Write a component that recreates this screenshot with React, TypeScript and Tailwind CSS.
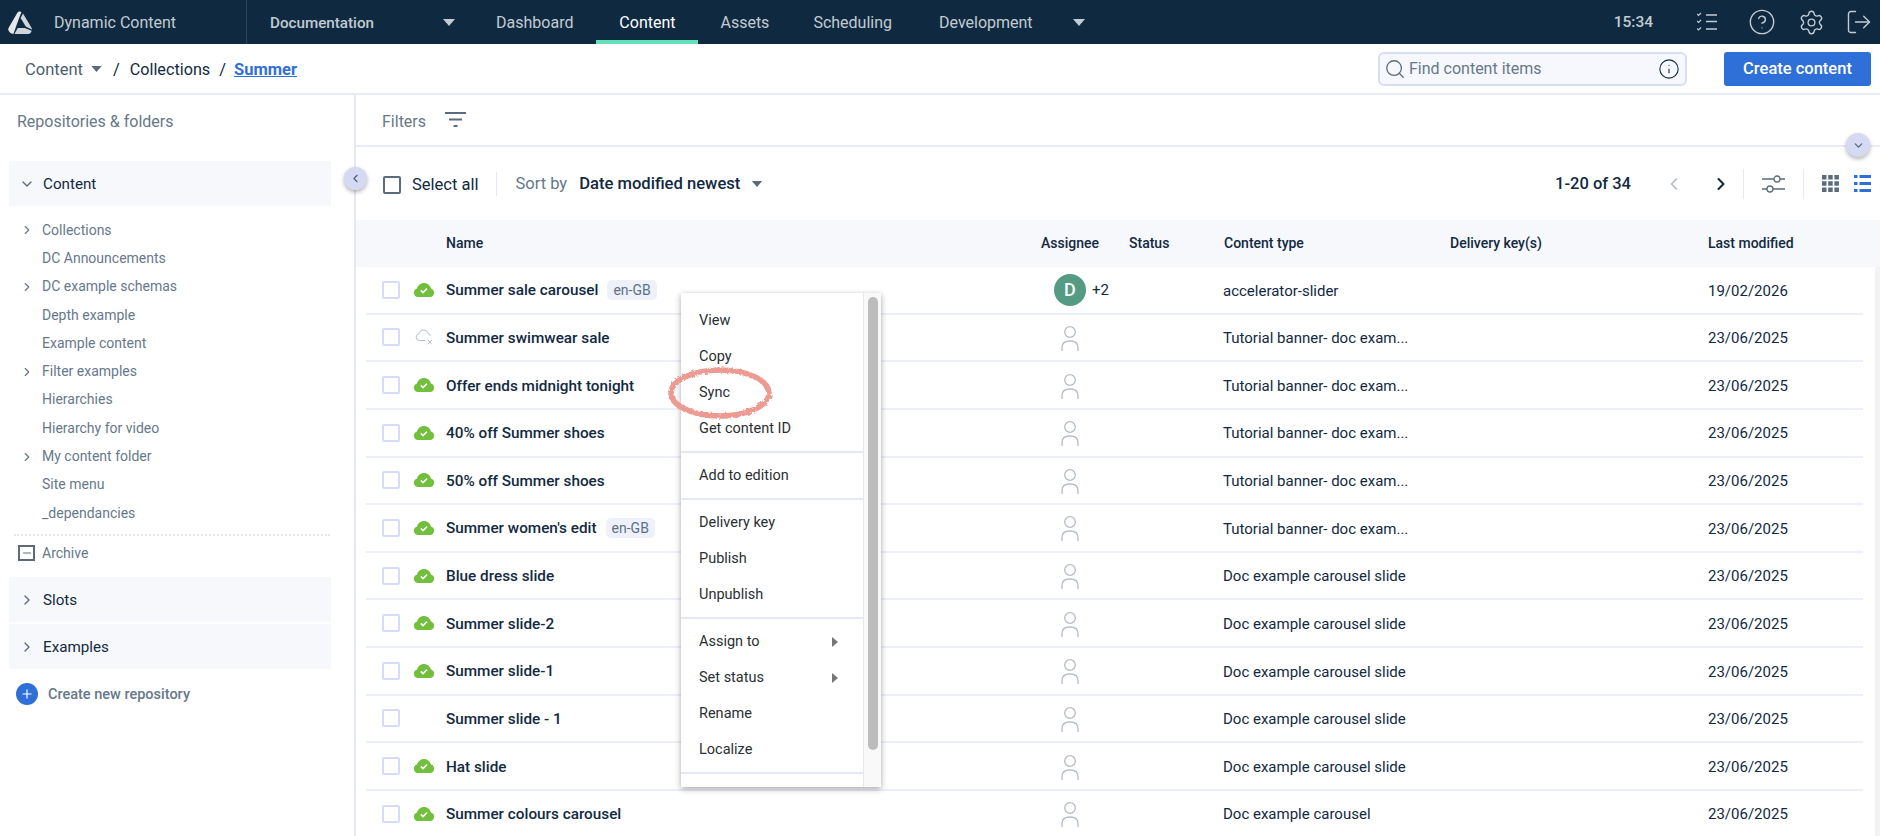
import { ChevronDown, ChevronLeft, ChevronRight, Plus, Search, Info, Settings, LogOut, CircleHelp, Minus } from 'lucide-react';

const font = 'font-["Roboto","Liberation_Sans",sans-serif]';

const tree = [
  { name: 'Collections', arrow: true },
  { name: 'DC Announcements' },
  { name: 'DC example schemas', arrow: true },
  { name: 'Depth example' },
  { name: 'Example content' },
  { name: 'Filter examples', arrow: true },
  { name: 'Hierarchies' },
  { name: 'Hierarchy for video' },
  { name: 'My content folder', arrow: true },
  { name: 'Site menu' },
  { name: '_dependancies' },
];

const tut = 'Tutorial banner- doc exam...';
const slide = 'Doc example carousel slide';

const rows = [
  { name: 'Summer sale carousel', tag: true, status: 'ok', type: 'accelerator-slider', date: '19/02/2026', avatar: true },
  { name: 'Summer swimwear sale', status: 'off', type: tut, date: '23/06/2025' },
  { name: 'Offer ends midnight tonight', status: 'ok', type: tut, date: '23/06/2025' },
  { name: '40% off Summer shoes', status: 'ok', type: tut, date: '23/06/2025' },
  { name: '50% off Summer shoes', status: 'ok', type: tut, date: '23/06/2025' },
  { name: "Summer women's edit", tag: true, status: 'ok', type: tut, date: '23/06/2025' },
  { name: 'Blue dress slide', status: 'ok', type: slide, date: '23/06/2025' },
  { name: 'Summer slide-2', status: 'ok', type: slide, date: '23/06/2025' },
  { name: 'Summer slide-1', status: 'ok', type: slide, date: '23/06/2025' },
  { name: 'Summer slide - 1', status: 'none', type: slide, date: '23/06/2025' },
  { name: 'Hat slide', status: 'ok', type: slide, date: '23/06/2025' },
  { name: 'Summer colours carousel', status: 'ok', type: 'Doc example carousel', date: '23/06/2025' },
];

function Caret({ className }: { className: string }) {
  return (
    <svg viewBox="0 0 12 7" className={className} fill="currentColor">
      <path d="M0 0h12L6 7z" />
    </svg>
  );
}

function Logo() {
  return (
    <svg viewBox="0 0 24 23" className="h-[23px] w-[24px]" fill="#e4e8ec">
      <path d="M9.500 1.500c.7-1.200 3-1.500 4-.5L11 7.200 5.600 22.600c-1 .5-2.300.2-3-.5C1.400 21 .2 19.500.2 18.500c0-.7.300-1.300.6-1.900z" />
      <path d="M15 2.500l8.500 14.300c.3.600.4 1 .3 1.600l-6-3L12.600 7z" opacity="0.9" />
      <path d="M9.800 17h7l6.800 2.800c-.3 1.800-1.500 3.100-3 3.100H7.500c-.4 0-.7-.1-1-.2z" opacity="0.9" />
    </svg>
  );
}

function Checklist() {
  return (
    <svg viewBox="0 0 20 20" className="h-[20px] w-[20px]" fill="none" stroke="currentColor">
      <path d="M0 2l1.500 1.500L4 1M0 9l1.500 1.500L4 8M0 16.500L1.500 18 4 15.500" strokeWidth="1.200" />
      <path d="M9 3h11M9 9.500h11M9 17h11" strokeWidth="1.600" />
    </svg>
  );
}

function CloudOk() {
  return (
    <svg viewBox="0 0 22 14" className="h-[14px] w-[22px]">
      <path d="M5 14a4.300 4.300 0 0 1-1-8.400C4.800 2.300 7.700 0 11 0s6.200 2.300 7 5.600A4.300 4.300 0 0 1 17 14z" fill="#71bf3c" />
      <path d="M7.800 7.400l2.200 2.200 4-4" stroke="#fff" strokeWidth="1.500" fill="none" />
    </svg>
  );
}

function CloudOff() {
  return (
    <svg viewBox="0 0 18 16" className="h-[16px] w-[18px]" fill="none" stroke="#b4bcc4" strokeWidth="1">
      <path d="M10.500 11.500H4.200a3.300 3.300 0 0 1-.5-6.500C4.300 2.600 6 1 8.500 1c2.300 0 4.200 1.500 4.800 3.600a3 3 0 0 1 2.200 2.400" />
      <path d="M12.800 11l4 4.300M16.800 11l-4 4.300" />
    </svg>
  );
}

function Person() {
  return (
    <svg viewBox="0 0 18 25" className="h-[25px] w-[18px]" fill="none" stroke="#b4bcc4" strokeWidth="1.300">
      <circle cx="9" cy="6" r="5.300" />
      <path d="M1 25v-3.500C1 17.500 4 15 9 15s8 2.500 8 6.500V25" />
    </svg>
  );
}

function Accordion({ label, open }: { label: string; open?: boolean }) {
  return (
    <div className="mx-[9px] flex h-[45px] w-[322px] items-center bg-[#f7f8fc] pl-[10px]">
      {open ? <ChevronDown className="h-4 w-4 text-[#5b6b7b]" /> : <ChevronRight className="h-4 w-4 text-[#5b6b7b]" />}
      <span className="ml-[8px] pt-[2px] text-[15.200px] text-[#12293f]">{label}</span>
    </div>
  );
}

function Sidebar() {
  return (
    <aside className="w-[356px] shrink-0 border-r-2 border-[#e5e8f8]">
      <div className="pl-[17px] pt-[17px] text-[16px] leading-[20px] text-[#66788a]">Repositories &amp; folders</div>
      <div className="mt-[29px]">
        <Accordion label="Content" open />
      </div>
      <div className="mt-[10px]">
        {tree.map((t) => (
          <div key={t.name} className="relative flex h-[28.300px] items-center pl-[42px] text-[14px] text-[#66788a]">
            {t.arrow && <ChevronRight className="absolute left-[20px] h-[14px] w-[14px] text-[#66788a]" />}
            {t.name}
          </div>
        ))}
      </div>
      <div className="mx-[14px] mt-[7px] w-[316px] border-t-2 border-dotted border-[#e3e6ea]" />
      <div className="mt-[3px] flex h-[28px] items-center pl-[18px] text-[14px] text-[#66788a]">
        <span className="flex h-[16px] w-[17px] items-center justify-center border-2 border-[#5b6b7b]">
          <Minus className="h-3 w-3 text-[#5b6b7b]" />
        </span>
        <span className="ml-[7px]">Archive</span>
      </div>
      <div className="mt-[10px]">
        <Accordion label="Slots" />
      </div>
      <div className="mt-[2px]">
        <Accordion label="Examples" />
      </div>
      <div className="mt-[13px] flex items-center pl-[16px]">
        <span className="flex h-[22px] w-[22px] items-center justify-center rounded-full bg-[#2f6fd8]">
          <Plus className="h-[14px] w-[14px] text-white" />
        </span>
        <span className="ml-[10px] pt-[2px] text-[14.500px] font-medium text-[#66788a]">Create new repository</span>
      </div>
    </aside>
  );
}

function Row({ r }: { r: (typeof rows)[number] }) {
  return (
    <div className="ml-[10px] mr-[17px] flex h-[47.640px] items-center border-b-2 border-[#eceefb]">
      <span className="ml-[16px] h-[18px] w-[18px] shrink-0 rounded-[2px] border-2 border-[#d6dcf7]" />
      <span className="ml-[13px] flex w-[22px] shrink-0 justify-center">
        {r.status === 'ok' && <CloudOk />}
        {r.status === 'off' && <CloudOff />}
      </span>
      <span className="ml-[11px] w-[594px] shrink-0 pt-[2px] text-[15.300px] font-medium text-[#12293f]">
        {r.name}
        {r.tag && <span className="ml-[9px] rounded-[5px] bg-[#eef1fb] px-[6px] py-[2px] text-[14px] font-normal text-[#5d7083]">en-GB</span>}
      </span>
      <span className="flex w-[183px] shrink-0 items-center pl-[14px]">
        {r.avatar ? (
          <>
            <span className="flex h-[32px] w-[32px] items-center justify-center rounded-full bg-[#559a82] text-[18px] font-medium text-white">D</span>
            <span className="ml-[6px] text-[15px] text-[#12293f]">+2</span>
          </>
        ) : (
          <span className="ml-[7px] mt-[2px]">
            <Person />
          </span>
        )}
      </span>
      <span className="w-[485px] shrink-0 pt-[2px] text-[15px] text-[#12293f]">{r.type}</span>
      <span className="pt-[2px] text-[15px] text-[#12293f]">{r.date}</span>
    </div>
  );
}

function Menu() {
  const item = 'flex h-[36px] items-center justify-between pl-[18px] pr-[25px] pt-[2px] text-[14.500px] text-[#2a2f33]';
  const sep = 'border-t-2 border-[#e4e8fa] pt-[4px] pb-[5px]';
  return (
    <div className="absolute left-[681px] top-[293px] flex h-[494px] w-[200px] overflow-hidden bg-white shadow-[0_2px_6px_rgba(0,0,0,0.35)]">
      <div className="w-[182px] pt-[9px]">
        {['View', 'Copy', 'Sync', 'Get content ID'].map((m) => (
          <div key={m} className={item}>{m}</div>
        ))}
        <div className={`${sep} mt-[5px]`}>
          <div className={item}>Add to edition</div>
        </div>
        <div className={sep}>
          {['Delivery key', 'Publish', 'Unpublish'].map((m) => (
            <div key={m} className={item}>{m}</div>
          ))}
        </div>
        <div className={sep}>
          {['Assign to', 'Set status'].map((m) => (
            <div key={m} className={item}>
              {m}
              <svg viewBox="0 0 6 10" className="h-[10px] w-[6px]" fill="#777"><path d="M0 0l6 5-6 5z" /></svg>
            </div>
          ))}
          {['Rename', 'Localize'].map((m) => (
            <div key={m} className={item}>{m}</div>
          ))}
        </div>
        <div className={sep} />
      </div>
      <div className="h-full w-[18px] border-l border-[#e8e8e8] bg-[#f9f9f9] pl-[4px] pt-[4px]">
        <div className="h-[453px] w-[10px] rounded-full bg-[#bcbcbc]" />
      </div>
    </div>
  );
}

export default function App() {
  return (
    <div className={`relative h-[836px] w-[1880px] overflow-hidden bg-white ${font}`}>
      {/* top nav */}
      <header className="flex h-[44px] items-center bg-[#0f2a40] text-[#c3cbd2]">
        <div className="ml-[8px]"><Logo /></div>
        <span className="ml-[22px] pt-[2px] text-[16px]">Dynamic Content</span>
        <span className="ml-[70px] h-full w-px bg-[#2b4458]" />
        <span className="ml-[23px] w-[173px] pt-[2px] text-[15.200px] font-medium">Documentation</span>
        <Caret className="h-[7px] w-[12px]" />
        <span className="ml-[41px] pt-[2px] text-[16px]">Dashboard</span>
        <span className="relative ml-[23px] flex h-full w-[102px] items-center justify-center pt-[2px] text-[16px] text-white">
          Content
          <span className="absolute bottom-0 left-0 h-[4px] w-full bg-[#64e0b8]" />
        </span>
        <span className="ml-[22px] pt-[2px] text-[16px]">Assets</span>
        <span className="ml-[44px] pt-[2px] text-[16px]">Scheduling</span>
        <span className="ml-[47px] pt-[2px] text-[16px]">Development</span>
        <Caret className="ml-[40px] h-[7px] w-[12px]" />
        <span className="ml-auto pt-[2px] text-[15.500px] font-medium">15:34</span>
        <span className="ml-[44px]"><Checklist /></span>
        <CircleHelp className="ml-[31px] h-[28px] w-[28px]" strokeWidth={1.200} />
        <Settings className="ml-[22px] h-[27px] w-[27px]" strokeWidth={1.200} />
        <LogOut className="ml-[20px] mr-[7px] h-[28px] w-[28px]" strokeWidth={1.200} />
      </header>

      {/* breadcrumb bar */}
      <div className="flex h-[51px] items-center border-b-2 border-[#e9ebfa] pl-[25px]">
        <span className="pt-[3px] text-[16.500px] text-[#4a5d70]">Content</span>
        <Caret className="ml-[8px] h-[6px] w-[11px] text-[#5b6b7b]" />
        <span className="ml-[11px] pt-[3px] text-[16.500px] text-[#12293f]">/</span>
        <span className="ml-[10px] pt-[3px] text-[16.200px] text-[#12293f]">Collections</span>
        <span className="ml-[9px] pt-[3px] text-[16.500px] text-[#12293f]">/</span>
        <span className="ml-[8px] pt-[3px] text-[16.500px] font-bold text-[#2f6fd8] underline">Summer</span>
        <div className="ml-auto flex h-[34px] w-[309px] items-center rounded-[6px] border-2 border-[#d8ddf6] bg-[#f7f8fd] pl-[4px] pr-[5px]">
          <Search className="h-[22px] w-[22px] text-[#5b6b7b]" strokeWidth={1.400} />
          <span className="ml-[3px] text-[16px] text-[#66788a]">Find content items</span>
          <Info className="ml-auto h-[22px] w-[22px] text-[#12293f]" strokeWidth={1.200} />
        </div>
        <button className="ml-[37px] mr-[9px] h-[34px] w-[147px] rounded-[3px] bg-[#2f6fd8] pt-[2px] text-[16.500px] font-medium text-white">Create content</button>
      </div>

      <div className="flex h-[741px]">
        <Sidebar />
        <main className="min-w-0 flex-1">
          <div className="flex h-[52px] items-center border-b-2 border-[#e9ebfa] pl-[26px]">
            <span className="pt-[3px] text-[16px] text-[#66788a]">Filters</span>
            <svg viewBox="0 0 21 16" className="ml-[19px] h-[16px] w-[21px]" fill="#5b6b7b">
              <path d="M0 0h21v2H0zM4 6.500h13v2H4zM8.500 13h4v2h-4z" />
            </svg>
          </div>

          <div className="flex h-[73px] items-center pl-[27px]">
            <span className="mt-[3px] h-[18px] w-[18px] rounded-[2px] border-2 border-[#5b6b7b]" />
            <span className="ml-[11px] pt-[4px] text-[16.500px] text-[#12293f]">Select all</span>
            <span className="ml-[18px] h-[24px] w-px bg-[#e5e8f8]" />
            <span className="ml-[18px] pt-[2px] text-[16.500px] text-[#66788a]">Sort by</span>
            <span className="ml-[12px] pt-[2px] text-[16.600px] font-medium text-[#12293f]">Date modified newest</span>
            <Caret className="ml-[11px] h-[6px] w-[12px] text-[#5b6b7b]" />
            <span className="ml-auto pt-[2px] text-[16.500px] font-medium text-[#12293f]">1-20 of 34</span>
            <ChevronLeft className="ml-[33px] h-[20px] w-[20px] text-[#b4bcc4]" strokeWidth={2} />
            <ChevronRight className="ml-[27px] h-[20px] w-[20px] text-[#12293f]" strokeWidth={2.500} />
            <span className="ml-[12px] h-[30px] w-px bg-[#e5e8f8]" />
            <svg viewBox="0 0 23 18" className="ml-[18px] h-[18px] w-[23px]" fill="none" stroke="#5b6b7b" strokeWidth="1.300">
              <path d="M0 4h12M18 4h5M0 14h5M11 14h12" />
              <circle cx="15" cy="4" r="3" />
              <circle cx="8" cy="14" r="3" />
            </svg>
            <span className="ml-[18px] h-[30px] w-px bg-[#e5e8f8]" />
            <svg viewBox="0 0 17 17" className="ml-[18px] h-[17px] w-[17px]" fill="#5b6b7b">
              <path d="M0 0h4.500v4.500H0zM6.200 0h4.500v4.500H6.200zM12.400 0h4.500v4.500h-4.500zM0 6.200h4.500v4.500H0zM6.200 6.200h4.500v4.500H6.200zM12.400 6.200h4.500v4.500h-4.500zM0 12.400h4.500v4.500H0zM6.200 12.400h4.500v4.500H6.200zM12.400 12.400h4.500v4.500h-4.500z" />
            </svg>
            <svg viewBox="0 0 17 17" className="ml-[15px] mr-[9px] h-[17px] w-[17px]" fill="#2f6fd8">
              <path d="M0 0h3.500v3H0zM5.500 0H17v3H5.500zM0 7h3.500v3H0zM5.500 7H17v3H5.500zM0 14h3.500v3H0zM5.500 14H17v3H5.500z" />
            </svg>
          </div>

          <div className="flex h-[47px] items-center bg-[#f7f8fc] text-[14px] font-medium text-[#12293f]">
            <span className="ml-[90px] w-[595px]">Name</span>
            <span className="w-[88px]">Assignee</span>
            <span className="w-[95px]">Status</span>
            <span className="w-[226px]">Content type</span>
            <span className="w-[258px]">Delivery key(s)</span>
            <span>Last modified</span>
          </div>

          {rows.map((r) => (
            <Row key={r.name} r={r} />
          ))}
        </main>
      </div>

      {/* page scrollbar strip */}
      <div className="absolute bottom-0 right-0 top-[267px] w-[5px] bg-[#f3f3f3]" />

      <button className="absolute left-[344px] top-[167px] flex h-[23px] w-[23px] items-center justify-center rounded-full bg-[#d5daf2] shadow-[0_2px_4px_rgba(0,0,0,0.3)]">
        <ChevronLeft className="h-[13px] w-[13px] text-[#4a5d70]" />
      </button>
      <button className="absolute left-[1846px] top-[133px] flex h-[24px] w-[24px] items-center justify-center rounded-full bg-[#d5daf2] shadow-[0_2px_4px_rgba(0,0,0,0.3)]">
        <ChevronDown className="h-[13px] w-[13px] text-[#4a5d70]" />
      </button>

      <Menu />

      {/* hand-drawn highlight round Sync */}
      <svg className="absolute left-[660px] top-[362px] h-[62px] w-[120px]" viewBox="0 0 120 62" fill="none">
        <filter id="rough">
          <feTurbulence type="fractalNoise" baseFrequency="0.35" numOctaves="2" seed="3" />
          <feDisplacementMap in="SourceGraphic" scale="4" />
        </filter>
        <ellipse cx="60" cy="31" rx="49" ry="23" stroke="#ec9a92" strokeWidth="5.500" filter="url(#rough)" />
      </svg>
    </div>
  );
}
